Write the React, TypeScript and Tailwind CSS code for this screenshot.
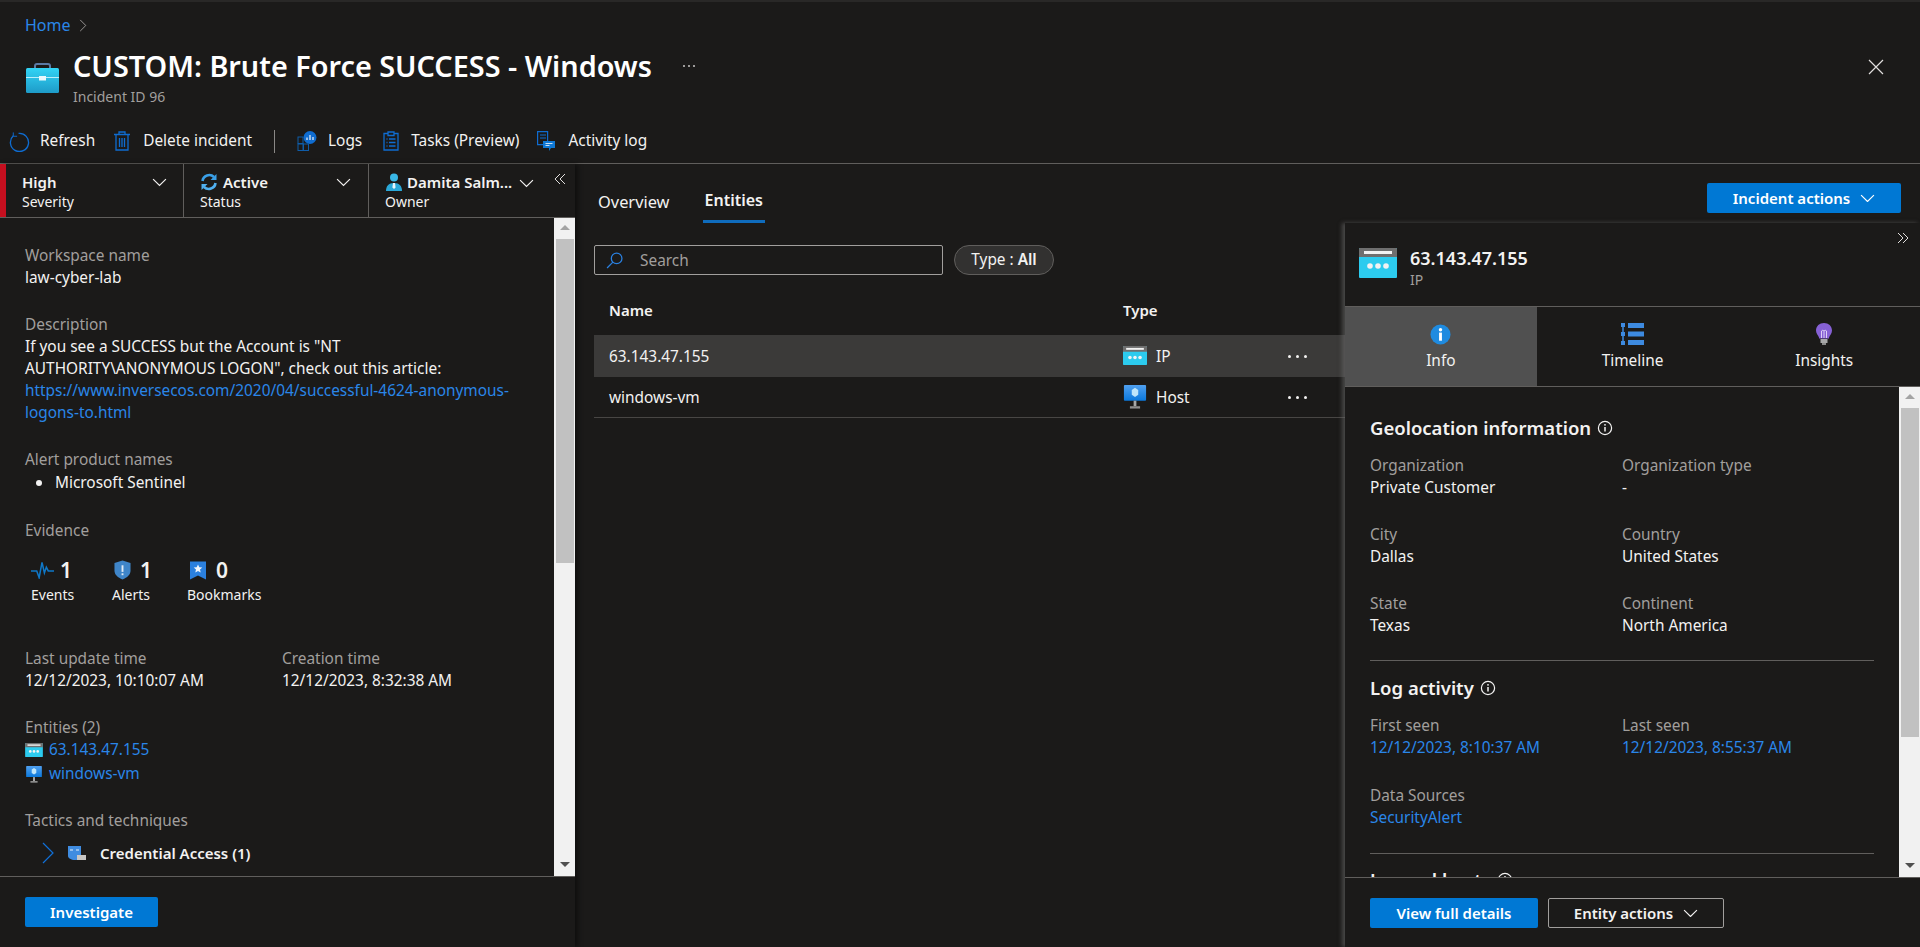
import type { ReactNode } from 'react'

const Chevron = ({ className = '' }: { className?: string }) => (
  <svg viewBox="0 0 14 8" className={className} fill="none" stroke="currentColor" strokeWidth="1.1">
    <path d="M1 1l6 6 6-6" />
  </svg>
)

const IpIcon = ({ className = '' }: { className?: string }) => (
  <svg viewBox="0 0 38 30" className={className}>
    <rect width="38" height="30" rx="1" fill="#2ccbee" />
    <path d="M1 0h36a1 1 0 011 1v8H0V1a1 1 0 011-1z" fill="#6f6f6f" />
    <rect x="5" y="3" width="28" height="3" fill="#f2f2f2" />
    <circle cx="11" cy="18" r="2.8" fill="#f2f2f2" />
    <circle cx="19" cy="18" r="2.8" fill="#f2f2f2" />
    <circle cx="27" cy="18" r="2.8" fill="#f2f2f2" />
  </svg>
)

const HostIcon = ({ className = '' }: { className?: string }) => (
  <svg viewBox="0 0 24 26" className={className}>
    <defs>
      <linearGradient id="hostg" x1="0" y1="0" x2="0" y2="1">
        <stop offset="0" stopColor="#50a0f0" />
        <stop offset="1" stopColor="#0a78dc" />
      </linearGradient>
    </defs>
    <rect width="24" height="17" rx="1" fill="url(#hostg)" />
    <path d="M12 3l3.5 2.4v5.2L12 13l-3.5-2.4V5.4z" fill="#bfe6fb" />
    <rect x="10.5" y="17" width="3" height="6" fill="#a8a8a8" />
    <rect x="6.5" y="23" width="11" height="2.5" fill="#8f8f8f" />
  </svg>
)

const InfoOutline = ({ className = '' }: { className?: string }) => (
  <svg viewBox="0 0 16 16" className={className} fill="none" stroke="#f3f2f1" strokeWidth="1.2">
    <circle cx="8" cy="8" r="6.6" />
    <path d="M8 7v4.6" strokeWidth="1.5" />
    <circle cx="8" cy="4.8" r="0.9" fill="#f3f2f1" stroke="none" />
  </svg>
)

function ToolItem({ icon, label, iconBox, gap, className = '' }: { icon: ReactNode; label: string; iconBox: string; gap: string; className?: string }) {
  return (
    <div className={`flex items-center ${gap} ${className}`}>
      <div className={`flex items-center justify-center ${iconBox}`}>{icon}</div>
      <span className="text-[15.4px] leading-[22px] text-[#f3f2f1]">{label}</span>
    </div>
  )
}

function Field({ label, value, link, className = '' }: { label: string; value: string; link?: boolean; className?: string }) {
  return (
    <div className={className}>
      <div className="text-[15.4px] leading-[22px] text-[#a19f9d]">{label}</div>
      <div className={`text-[15.4px] leading-[22px] ${link ? 'text-[#2a86e8]' : 'text-[#f3f2f1]'}`}>{value}</div>
    </div>
  )
}

function Scrollbar({ thumbHeight }: { thumbHeight: string }) {
  return (
    <div className="flex w-[21px] shrink-0 flex-col items-center bg-[#f1f1f1]">
      <div className="flex h-[21px] w-full justify-center">
        <div className="mt-[7px] h-0 w-0 border-x-[5px] border-b-[5px] border-x-transparent border-b-[#a3a3a3]" />
      </div>
      <div className={`w-[18px] bg-[#c1c1c1] ${thumbHeight}`} />
      <div className="flex-1" />
      <div className="mb-[9px] h-0 w-0 border-x-[5px] border-t-[5px] border-x-transparent border-t-[#505050]" />
    </div>
  )
}

function Evidence({ icon, count, label, className }: { icon: ReactNode; count: number; label: string; className: string }) {
  return (
    <div className={className}>
      <div className="flex h-[28px] items-center">
        {icon}
        <span className="text-[21px] font-semibold leading-[28px] text-[#f3f2f1]">{count}</span>
      </div>
      <div className="text-[14px] leading-[22px] text-[#f3f2f1]">{label}</div>
    </div>
  )
}

function LeftPanel() {
  return (
    <div className="flex w-[575px] shrink-0 flex-col shadow-[3px_0_5px_rgba(0,0,0,0.45)]">
      <div className="flex h-[54px] shrink-0 border-b border-[#605e5c]">
        <div className="w-[6px] bg-[#c50f1f]" />
        <div className="relative w-[178px] border-r border-[#605e5c] pl-[16px] pt-[7px]">
          <div className="text-[15px] font-semibold leading-[22px] text-[#f3f2f1]">High</div>
          <div className="text-[14px] leading-[17px] text-[#f3f2f1]">Severity</div>
          <Chevron className="absolute right-[16px] top-[14px] w-[15px] text-[#f3f2f1]" />
        </div>
        <div className="relative w-[185px] border-r border-[#605e5c] pl-[16px] pt-[7px]">
          <div className="flex items-center gap-[5px] text-[15px] font-semibold leading-[22px] text-[#f3f2f1]">
            <svg viewBox="0 0 18 18" className="h-[18px] w-[18px]" fill="none" strokeWidth="2.6">
              <path d="M2.5 8A6.8 6.8 0 0114 4" stroke="#3aa0e8" />
              <path d="M15.5 10A6.8 6.8 0 014 14" stroke="#50b0f0" />
              <path d="M16.5 1v6h-6z" fill="#3aa0e8" />
              <path d="M1.5 17v-6h6z" fill="#50b0f0" />
            </svg>
            Active
          </div>
          <div className="text-[14px] leading-[17px] text-[#f3f2f1]">Status</div>
          <Chevron className="absolute right-[17px] top-[14px] w-[15px] text-[#f3f2f1]" />
        </div>
        <div className="relative flex-1 pl-[16px] pt-[7px]">
          <div className="flex items-center gap-[5px] text-[15px] font-semibold leading-[22px] text-[#f3f2f1]">
            <svg viewBox="0 0 16 18" className="ml-px h-[18px] w-[16px]">
              <circle cx="8" cy="4.5" r="4" fill="#39b7e6" />
              <path d="M0 18c0-5 2.5-8 8-8s8 3 8 8z" fill="#2aa8d8" />
              <path d="M7 10h2l.6 4.5L8 16l-1.6-1.500z" fill="#e8f6fb" />
            </svg>
            Damita Salm...
          </div>
          <div className="text-[14px] leading-[17px] text-[#f3f2f1]">Owner</div>
          <Chevron className="absolute left-[150px] top-[15px] w-[15px] text-[#f3f2f1]" />
          <svg viewBox="0 0 12 12" className="absolute right-[9px] top-[9px] h-[12px] w-[12px]" fill="none" stroke="#e1dfdd" strokeWidth="1">
            <path d="M6 1L1 6l5 5M11 1L6 6l5 5" />
          </svg>
        </div>
      </div>

      <div className="flex min-h-0 flex-1 border-b border-[#605e5c]">
        <div className="min-w-0 flex-1 overflow-hidden pl-[25px] pt-[27px]">
          <Field label="Workspace name" value="law-cyber-lab" />
          <div className="mt-[25px] text-[15.4px] leading-[22px] text-[#a19f9d]">Description</div>
          <div className="w-[490px] text-[15.4px] leading-[22px] text-[#f3f2f1]">
            If you see a SUCCESS but the Account is "NT AUTHORITY\ANONYMOUS LOGON", check out this article:{' '}
            <span className="text-[#2a86e8]">https://www.inversecos.com/2020/04/successful-4624-anonymous-logons-to.html</span>
          </div>
          <div className="mt-[25px] text-[15.4px] leading-[22px] text-[#a19f9d]">Alert product names</div>
          <div className="mt-px flex items-center text-[15.4px] leading-[22px] text-[#f3f2f1]">
            <span className="ml-[11px] mr-[13px] h-[6px] w-[6px] rounded-full bg-[#f3f2f1]" />
            Microsoft Sentinel
          </div>
          <div className="mt-[26px] text-[15.4px] leading-[22px] text-[#a19f9d]">Evidence</div>
          <div className="mt-[14px] flex">
            <Evidence
              className="ml-[6px] w-[81px]"
              count={1}
              label="Events"
              icon={
                <svg viewBox="0 0 24 18" className="mr-[6px] h-[18px] w-[23px]" fill="none" stroke="#0f78c8" strokeWidth="1.6">
                  <path d="M0 10h6l2.500 7 3-16 2.500 11 2-6 2 4h6" />
                </svg>
              }
            />
            <Evidence
              className="w-[75px]"
              count={1}
              label="Alerts"
              icon={
                <svg viewBox="0 0 18 20" className="ml-[2px] mr-[9px] h-[20px] w-[17px]">
                  <path d="M9 0l8.500 2.500v8c0 4.500-3.500 7.500-8.500 9.500C4 18 .5 15 .5 10.500v-8z" fill="#3f85c8" />
                  <rect x="8" y="5" width="2" height="7" fill="#dfeaf4" />
                  <rect x="8" y="13.500" width="2" height="2" fill="#dfeaf4" />
                </svg>
              }
            />
            <Evidence
              className=""
              count={0}
              label="Bookmarks"
              icon={
                <svg viewBox="0 0 16 18" className="ml-[3px] mr-[10px] h-[19px] w-[16px]">
                  <path d="M0 0h16v18l-8-4-8 4z" fill="#2b80de" />
                  <path d="M8 3l1.300 2.800 3 .3-2.300 2 .7 3L8 9.500 5.300 11.100l.7-3-2.300-2 3-.3z" fill="#f2f6fb" />
                </svg>
              }
            />
          </div>
          <div className="mt-[42px] flex">
            <Field className="w-[257px]" label="Last update time" value="12/12/2023, 10:10:07 AM" />
            <Field label="Creation time" value="12/12/2023, 8:32:38 AM" />
          </div>
          <div className="mt-[25px] text-[15.4px] leading-[22px] text-[#a19f9d]">Entities (2)</div>
          <div className="flex h-[22px] items-center gap-[6px] text-[15.4px] text-[#2a86e8]">
            <IpIcon className="h-[14px] w-[18px]" />
            63.143.47.155
          </div>
          <div className="mt-[2px] flex h-[22px] items-center gap-[6px] text-[15.4px] text-[#2a86e8]">
            <HostIcon className="h-[17px] w-[18px]" />
            windows-vm
          </div>
          <div className="mt-[25px] text-[15.4px] leading-[22px] text-[#a19f9d]">Tactics and techniques</div>
          <div className="mt-[10px] flex h-[22px] items-center">
            <svg viewBox="0 0 12 22" className="ml-[17px] h-[22px] w-[12px]" fill="none" stroke="#1070d8" strokeWidth="1.2">
              <path d="M1 1l10 10L1 21" />
            </svg>
            <svg viewBox="0 0 18 16" className="ml-[14px] h-[16px] w-[18px]">
              <path d="M0 1h13v10c0 2-2 4-6 4s-7-2-7-4z" fill="#3f8ce0" />
              <path d="M2 5h3M8 5h3" stroke="#e6f0fa" strokeWidth="1.2" />
              <rect x="9" y="10" width="9" height="5" fill="#c8c6c4" />
            </svg>
            <span className="ml-[14px] text-[15px] font-semibold text-[#f3f2f1]">Credential Access (1)</span>
          </div>
        </div>
        <Scrollbar thumbHeight="h-[324px]" />
      </div>

      <div className="h-[70px] shrink-0 pl-[25px] pt-[20px]">
        <button className="h-[30px] w-[133px] rounded-[2px] bg-[#0078d4] text-[15px] font-semibold text-white">Investigate</button>
      </div>
    </div>
  )
}

function EntityRow({ name, type, icon, active }: { name: string; type: string; icon: ReactNode; active?: boolean }) {
  return (
    <div className={`ml-[19px] flex items-center pl-[15px] text-[15.4px] text-[#f3f2f1] ${active ? 'h-[42px] bg-[#3b3a39]' : 'h-[41px] border-b border-[#484644]'}`}>
      <div className="w-[514px] pt-[2px]">{name}</div>
      <div className="flex w-[165px] items-center gap-[9px]">
        {icon}
        <span className="pt-[2px]">{type}</span>
      </div>
      <div className="flex gap-[5px]">
        <span className="h-[3px] w-[3px] rounded-full bg-[#f3f2f1]" />
        <span className="h-[3px] w-[3px] rounded-full bg-[#f3f2f1]" />
        <span className="h-[3px] w-[3px] rounded-full bg-[#f3f2f1]" />
      </div>
    </div>
  )
}

function EntityList() {
  return (
    <div className="w-[770px] shrink-0 pt-[22px]">
      <div className="ml-[19px] flex gap-[11px]">
        <div className="flex h-[30px] w-[349px] items-center rounded-[2px] border border-[#a19f9d] pl-[11px] text-[15.4px] text-[#a19f9d]">
          <svg viewBox="0 0 16 16" className="mr-[17px] h-[17px] w-[17px]" fill="none" stroke="#2a80e0" strokeWidth="1.2">
            <circle cx="10" cy="6" r="5" />
            <path d="M6.500 9.500L1 15" />
          </svg>
          <span className="pt-[2px]">Search</span>
        </div>
        <div className="flex h-[30px] w-[100px] items-center justify-center rounded-full border border-[#605e5c] bg-[#323130] text-[15.4px] text-[#f3f2f1]">
          Type :&nbsp;<span className="font-semibold">All</span>
        </div>
      </div>
      <div className="ml-[19px] mt-[10px] flex h-[50px] items-center pl-[15px] text-[15px] font-semibold text-[#f3f2f1]">
        <div className="w-[514px]">Name</div>
        <div>Type</div>
      </div>
      <EntityRow active name="63.143.47.155" type="IP" icon={<IpIcon className="h-[19px] w-[24px]" />} />
      <EntityRow name="windows-vm" type="Host" icon={<HostIcon className="h-[24px] w-[24px]" />} />
    </div>
  )
}

function DetailTab({ label, icon, active }: { label: string; icon: ReactNode; active?: boolean }) {
  return (
    <div className={`flex flex-1 flex-col items-center pt-[16px] ${active ? 'bg-[#505050]' : ''}`}>
      <div className="flex h-[22px] items-center">{icon}</div>
      <div className="mt-[5px] text-[15.4px] leading-[22px] text-[#f3f2f1]">{label}</div>
    </div>
  )
}

function Heading({ text, className = '' }: { text: string; className?: string }) {
  return (
    <div className={`flex h-[28px] items-center gap-[6px] pt-[2px] text-[18.5px] font-semibold text-[#f3f2f1] ${className}`}>
      {text}
      <InfoOutline className="h-[16px] w-[16px]" />
    </div>
  )
}

function DetailPanel() {
  return (
    <div className="flex min-w-0 flex-1 flex-col shadow-[-3px_0_4px_rgba(110,110,110,0.55)]">
      <div className="relative flex h-[84px] shrink-0 items-start border-b border-[#605e5c] pl-[14px] pt-[25px]">
        <IpIcon className="h-[30px] w-[38px]" />
        <div className="ml-[13px] mt-[-2px]">
          <div className="text-[18px] font-semibold leading-[24px] text-[#f3f2f1]">63.143.47.155</div>
          <div className="text-[14px] leading-[20px] text-[#a19f9d]">IP</div>
        </div>
        <svg viewBox="0 0 12 12" className="absolute right-[11px] top-[9px] h-[12px] w-[12px]" fill="none" stroke="#e1dfdd" strokeWidth="1">
          <path d="M6 1l5 5-5 5M1 1l5 5-5 5" />
        </svg>
      </div>
      <div className="flex h-[80px] shrink-0 border-b border-[#605e5c]">
        <DetailTab
          active
          label="Info"
          icon={
            <svg viewBox="0 0 22 22" className="h-[21px] w-[21px]">
              <circle cx="11" cy="11" r="10.500" fill="#1f8be0" />
              <rect x="9.500" y="9" width="3" height="8.500" fill="#fff" />
              <circle cx="11" cy="6" r="1.800" fill="#fff" />
            </svg>
          }
        />
        <DetailTab
          label="Timeline"
          icon={
            <svg viewBox="0 0 23 22" className="h-[22px] w-[23px]" fill="#3d8ae0">
              <rect x="1.250" y="1" width="1.500" height="20" />
              <rect x="0" y="0" width="4" height="4" />
              <rect x="0" y="9" width="4" height="4" />
              <rect x="0" y="18" width="4" height="4" />
              <rect x="7" y="0" width="16" height="5" />
              <rect x="7" y="8.500" width="16" height="5" />
              <rect x="7" y="17" width="16" height="5" />
            </svg>
          }
        />
        <DetailTab
          label="Insights"
          icon={
            <svg viewBox="0 0 16 22" className="h-[22px] w-[16px]">
              <path d="M8 0c4.500 0 8 3 8 7.500 0 3-2 4.500-3 7v1H3v-1c-1-2.500-3-4-3-7C0 3 3.500 0 8 0z" fill="#8661d5" />
              <path d="M5.500 15V8a1.500 1.500 0 012.500 0M10.500 15V8A1.500 1.500 0 008 8v7" fill="none" stroke="#e6dcf8" strokeWidth="0.9" />
              <rect x="4.500" y="16" width="7" height="4" fill="#a8a8a8" />
              <rect x="6" y="20" width="4" height="2" fill="#8a8a8a" />
            </svg>
          }
        />
      </div>
      <div className="flex min-h-0 flex-1 border-b border-[#605e5c]">
        <div className="min-w-0 flex-1 overflow-hidden pl-[25px] pr-[25px] pt-[26px]">
          <Heading text="Geolocation information" />
          <div className="mt-[14px] grid grid-cols-[252px_1fr] gap-y-[25px]">
            <Field label="Organization" value="Private Customer" />
            <Field label="Organization type" value="-" />
            <Field label="City" value="Dallas" />
            <Field label="Country" value="United States" />
            <Field label="State" value="Texas" />
            <Field label="Continent" value="North America" />
          </div>
          <div className="mt-[23px] h-px bg-[#605e5c]" />
          <Heading className="mt-[12px]" text="Log activity" />
          <div className="mt-[14px] grid grid-cols-[252px_1fr] gap-y-[26px]">
            <Field label="First seen" value="12/12/2023, 8:10:37 AM" link />
            <Field label="Last seen" value="12/12/2023, 8:55:37 AM" link />
            <Field label="Data Sources" value="SecurityAlert" link />
          </div>
          <div className="mt-[24px] h-px bg-[#605e5c]" />
          <Heading className="mt-[11px]" text="Logged hosts" />
        </div>
        <Scrollbar thumbHeight="h-[329px]" />
      </div>
      <div className="flex h-[69px] shrink-0 gap-[10px] pl-[25px] pt-[20px]">
        <button className="h-[30px] w-[168px] rounded-[2px] bg-[#0078d4] text-[15px] font-semibold text-white">View full details</button>
        <button className="flex h-[30px] w-[176px] items-center justify-center gap-[10px] rounded-[2px] border border-[#a19f9d] text-[15px] font-semibold text-[#f3f2f1]">
          Entity actions
          <Chevron className="w-[15px]" />
        </button>
      </div>
    </div>
  )
}

export default function App() {
  return (
    <div className="flex h-[947px] w-[1920px] flex-col overflow-hidden bg-[#1b1a19] font-['Noto_Sans','Liberation_Sans',sans-serif]">
      <div className="h-[2px] shrink-0 bg-[#292827]" />
      <div className="h-[162px] shrink-0 border-b border-[#605e5c]">
        <div className="flex items-center gap-[8px] pl-[25px] pt-[12px] text-[16px] leading-[22px] text-[#2a86e8]">
          Home
          <svg viewBox="0 0 8 14" className="h-[13px] w-[8px]" fill="none" stroke="#a19f9d" strokeWidth="1">
            <path d="M1 1l6 6-6 6" />
          </svg>
        </div>
        <div className="mt-[9px] flex items-start pl-[26px]">
          <svg viewBox="0 0 33 30" className="mt-[18px] h-[30px] w-[33px]">
            <defs>
              <linearGradient id="brief" x1="0" y1="0" x2="0" y2="1">
                <stop offset="0" stopColor="#32d4f5" />
                <stop offset="1" stopColor="#1e9bc8" />
              </linearGradient>
            </defs>
            <path d="M9 6V3a2 2 0 012-2h11a2 2 0 012 2v3" fill="none" stroke="#5a7aa5" strokeWidth="2" />
            <rect y="5" width="33" height="25" rx="1.500" fill="url(#brief)" />
            <rect y="14" width="33" height="1" fill="#b8effb" />
            <rect x="13" y="13" width="7" height="4.500" fill="#e8f8fc" />
          </svg>
          <div className="ml-[14px]">
            <div className="flex items-center">
              <span className="text-[28.8px] font-semibold leading-[41px] text-white">CUSTOM: Brute Force SUCCESS - Windows</span>
              <span className="ml-[31px] flex gap-[3px]">
                <span className="h-[2px] w-[2px] rounded-full bg-[#c8c6c4]" />
                <span className="h-[2px] w-[2px] rounded-full bg-[#c8c6c4]" />
                <span className="h-[2px] w-[2px] rounded-full bg-[#c8c6c4]" />
              </span>
            </div>
            <div className="text-[14px] leading-[22px] text-[#a19f9d]">Incident ID 96</div>
          </div>
          <svg viewBox="0 0 16 16" className="ml-auto mr-[36px] mt-[14px] h-[16px] w-[16px]" fill="none" stroke="#e1dfdd" strokeWidth="1.2">
            <path d="M1 1l14 14M15 1L1 15" />
          </svg>
        </div>
        <div className="mt-[21px] flex h-[24px] items-center pl-[9px]">
          <ToolItem
            label="Refresh"
            gap="gap-[10px]"
            iconBox="w-[21px]"
            icon={
              <svg viewBox="0 0 22 22" className="h-[21px] w-[21px]" fill="none" stroke="#0f6cd0" strokeWidth="1.4">
                <path d="M10 2.500A9.500 9.500 0 114.500 5" />
                <path d="M4.500 1.500V5.500H8.500" strokeWidth="1" />
              </svg>
            }
          />
          <ToolItem
            className="ml-[19px]"
            label="Delete incident"
            gap="gap-[13px]"
            iconBox="w-[16px]"
            icon={
              <svg viewBox="0 0 16 20" className="h-[20px] w-[16px]" fill="none" stroke="#0f6cd0" strokeWidth="1.3">
                <path d="M0 3.500h16M5 3V1h6v2M2 3.500V19h12V3.500M5.500 7v9M8 7v9M10.500 7v9" />
              </svg>
            }
          />
          <div className="ml-[22px] h-[23px] w-px bg-[#8a8886]" />
          <ToolItem
            className="ml-[22px]"
            label="Logs"
            gap="gap-[11px]"
            iconBox="w-[20px]"
            icon={
              <svg viewBox="0 0 20 20" className="h-[20px] w-[20px]">
                <circle cx="13" cy="6.500" r="6.500" fill="#0f6cd0" />
                <path d="M10 9V6.500M13 9V4M16 9V6" stroke="#dfeaf4" strokeWidth="1.3" />
                <g fill="none" stroke="#0f5ca8" strokeWidth="1">
                  <rect x="1" y="6" width="5" height="6.500" />
                  <rect x="1" y="13" width="5" height="6.500" />
                  <rect x="6.500" y="13" width="5" height="6.500" />
                </g>
              </svg>
            }
          />
          <ToolItem
            className="ml-[21px]"
            label="Tasks (Preview)"
            gap="gap-[12px]"
            iconBox="w-[16px]"
            icon={
              <svg viewBox="0 0 16 20" className="h-[20px] w-[16px]" fill="none" stroke="#0f6cd0" strokeWidth="1.3">
                <path d="M5 2.500H1V19h14V2.500h-4M5 1h6v3.500H5zM3.500 8h1M6 8h6.500M3.500 11.500h1M6 11.500h6.500M3.500 15h1M6 15h6.500" />
              </svg>
            }
          />
          <ToolItem
            className="ml-[18px]"
            label="Activity log"
            gap="gap-[13px]"
            iconBox="w-[18px]"
            icon={
              <svg viewBox="0 0 18 20" className="h-[20px] w-[18px]">
                <path d="M.6.6h10v13H.6z" fill="none" stroke="#0f6cd0" strokeWidth="1.2" />
                <path d="M3 4h6M3 7h6" stroke="#0f6cd0" strokeWidth="1" />
                <path d="M6 10h12v7h-4l-2 3v-3H6z" fill="#0f78d4" />
                <path d="M8.500 12.500h7M8.500 14.500h4" stroke="#dfeaf4" strokeWidth="0.9" />
              </svg>
            }
          />
        </div>
      </div>

      <div className="flex min-h-0 flex-1">
        <LeftPanel />
        <div className="flex min-w-0 flex-1 flex-col">
          <div className="flex h-[59px] shrink-0 items-start justify-between pr-[19px]">
            <div className="flex gap-[33px] pl-[23px]">
              <div className="flex h-[59px] items-center pt-[17px] text-[16.4px] text-[#f3f2f1]">Overview</div>
              <div className="flex h-[59px] items-center border-b-[3px] border-[#0f6cbd] px-[2px] pt-[16px] text-[16px] font-semibold text-[#f3f2f1]">Entities</div>
            </div>
            <button className="mt-[19px] flex h-[30px] w-[194px] items-center justify-center gap-[10px] rounded-[2px] bg-[#0078d4] text-[15px] font-semibold text-white">
              Incident actions
              <Chevron className="w-[15px]" />
            </button>
          </div>
          <div className="flex min-h-0 flex-1">
            <EntityList />
            <DetailPanel />
          </div>
        </div>
      </div>
    </div>
  )
}
